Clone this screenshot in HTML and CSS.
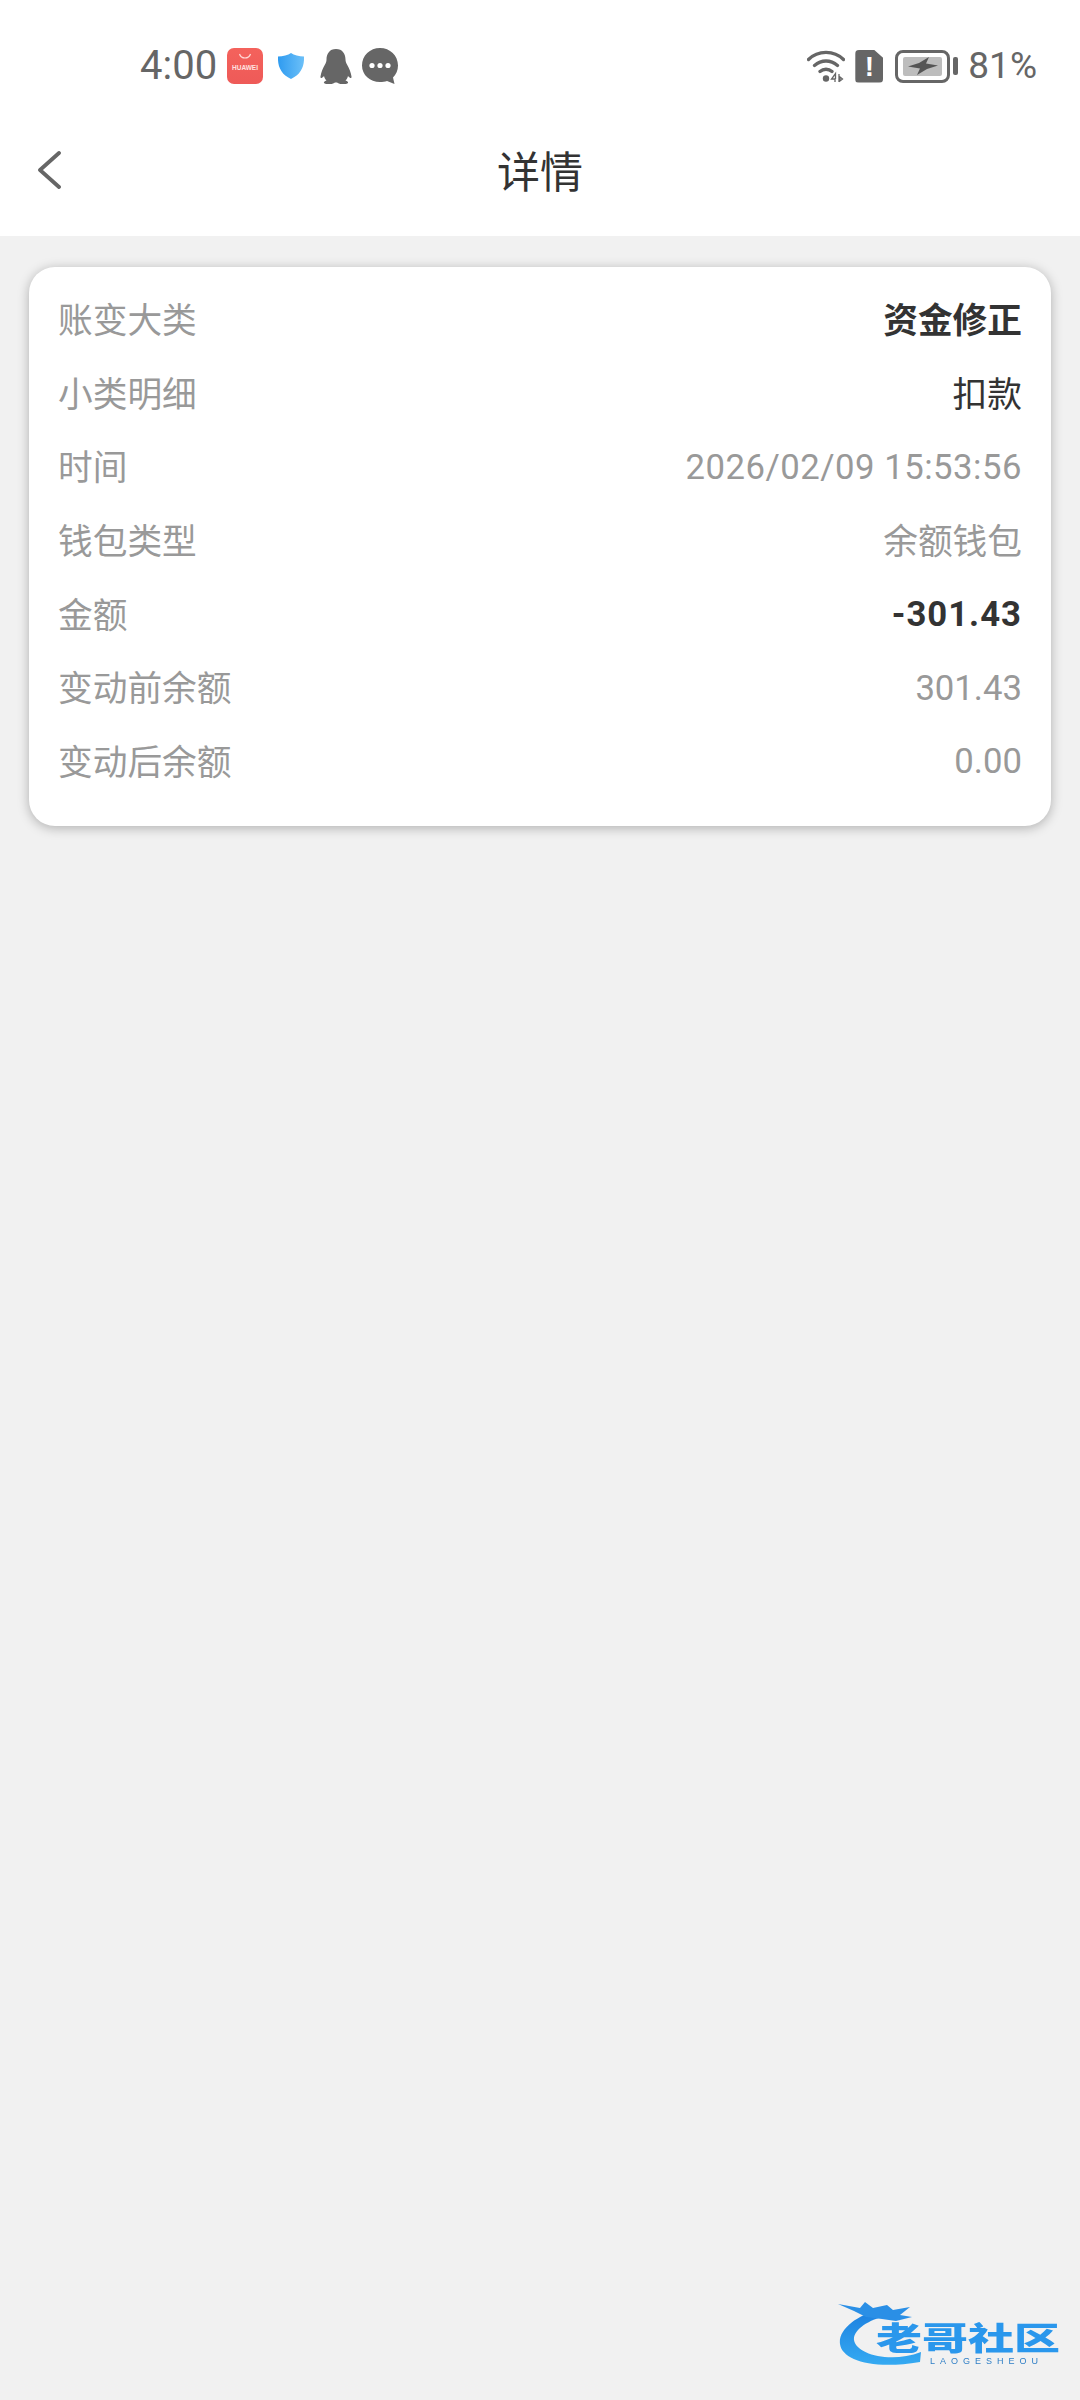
FILE: index.html
```html
<!DOCTYPE html>
<html lang="zh-CN">
<head>
  <meta charset="UTF-8">
  <meta name="viewport" content="width=device-width, initial-scale=1.0">
  <title>详情</title>
  <link rel="stylesheet" href="styles.css">
</head>
<body>
  <header class="top_area">
    <div class="status_bar">
      <div class="status_left">
        <span class="status_time">4:00</span>
        <div class="app_badge">
          <svg class="badge_smile" width="14" height="6" viewBox="0 0 14 6"><path d="M1.500 1c1 3 3 4 5.500 4s4.500-1 5.500-4" fill="none" stroke="#ffd9d6" stroke-width="1.200"/></svg>
          <span class="badge_text">HUAWEI</span>
        </div>
        <svg class="ico_shield" width="26" height="26" viewBox="0 0 26 26">
          <defs><linearGradient id="shield_fill" x1="0" y1="0" x2="1" y2="0"><stop offset="0" stop-color="#2f9bf0"/><stop offset="1" stop-color="#6cc0f8"/></linearGradient></defs>
          <path d="M13 0c3 2 8 3.500 13 3.500 .5 10-3 18-13 22.500C3 21.500-.5 13.500 0 3.500 5 3.500 10 2 13 0z" fill="url(#shield_fill)"/>
        </svg>
        <svg class="ico_qq" width="32" height="35" viewBox="0 0 32 35">
          <path d="M16 0c6.500 0 9.500 5 9.500 10.500 0 2 .5 3 1.500 5 2 3.500 4 8 4.500 12 .2 2-1 2.200-3.500-.5-.5 2-1.500 3.500-2.500 4.500 2 .7 3 1.500 2.500 2.500-.5 1-3 1-6 1-2.500 0-4-.7-5-1.500h-2c-1 .8-2.500 1.500-5 1.500-3 0-5.500 0-6-1-.5-1 .5-1.800 2.500-2.500-1-1-2-2.500-2.500-4.500C1.500 29.700.300 29.500.5 27.500c.5-4 2.500-8.500 4.500-12 1-2 1.500-3 1.500-5C6.500 5 9.500 0 16 0z" fill="#666"/>
        </svg>
        <svg class="ico_chat" width="36" height="37" viewBox="0 0 36 37">
          <path d="M18 0c10 0 18 7.500 18 17.500 0 5-2 9-5 12l1.500 6.500-7.500-3c-2 .7-4.500 1-7 1C8 34 0 27 0 17.500 0 7.500 8 0 18 0z" fill="#666"/>
          <circle cx="10" cy="17.500" r="2.600" fill="#fff"/><circle cx="18" cy="17.500" r="2.600" fill="#fff"/><circle cx="26" cy="17.500" r="2.600" fill="#fff"/>
        </svg>
      </div>
      <div class="status_right">
        <svg class="ico_wifi" width="38" height="34" viewBox="0 0 38 34">
          <path d="M1.500 10.500C11 1 27 1 36.500 10.500M7.500 16.500c7-6 16-6 23 0M13 22.500c3.500-3 8.500-3 12 0" fill="none" stroke="#666" stroke-width="3.300" stroke-linecap="round"/>
          <circle cx="19" cy="29.500" r="3.200" fill="#666"/>
          <path d="M28 33v-3h-3.500l4-5.500v5.500M32 25v8M33 28l2.500 2-2.500 2z" fill="none" stroke="#666" stroke-width="1.300"/>
        </svg>
        <div class="sim_card"><span class="sim_mark">!</span></div>
        <div class="battery">
          <div class="battery_body">
            <div class="battery_level">
              <svg width="30" height="18" viewBox="0 0 30 18"><path d="M0 9.500l11-3.500L21 0l-3 6.500 12 2-11 3.500L9 18l3-6.500z" fill="#555"/></svg>
            </div>
          </div>
          <div class="battery_nub"></div>
        </div>
        <span class="status_pct">81%</span>
      </div>
    </div>
    <nav class="nav_bar">
      <svg class="ico_back" width="24" height="38" viewBox="0 0 24 38"><path d="M22 2L3 19l19 17" fill="none" stroke="#666" stroke-width="3.800" stroke-linecap="round" stroke-linejoin="round"/></svg>
      <h1 class="nav_tit">详情</h1>
    </nav>
  </header>

  <main class="content">
    <section class="detail_card">
      <div class="detail_row"><span class="row_label">账变大类</span><span class="row_value text_strong">资金修正</span></div>
      <div class="detail_row"><span class="row_label">小类明细</span><span class="row_value text_dark">扣款</span></div>
      <div class="detail_row"><span class="row_label">时间</span><span class="row_value text_num text_time">2026/02/09 15:53:56</span></div>
      <div class="detail_row"><span class="row_label">钱包类型</span><span class="row_value">余额钱包</span></div>
      <div class="detail_row"><span class="row_label">金额</span><span class="row_value text_num text_strong text_amount">-301.43</span></div>
      <div class="detail_row"><span class="row_label">变动前余额</span><span class="row_value text_num">301.43</span></div>
      <div class="detail_row"><span class="row_label">变动后余额</span><span class="row_value text_num">0.00</span></div>
    </section>
  </main>

  <div class="watermark">
    <svg class="mark_dragon" width="90" height="70" viewBox="0 0 90 70">
      <defs><linearGradient id="mark_fill" x1="0" y1="0" x2="0" y2="1"><stop offset="0" stop-color="#1c7fdf"/><stop offset="1" stop-color="#35aaf2"/></linearGradient></defs>
      <path d="M42 10C18 15 0 30 2 44c2 16 32 26 80 18l1-10C52 64 18 54 16 40c-1-10 14-20 32-24z" fill="url(#mark_fill)"/>
      <path d="M0 4l22 4 5-6 8 6 14-3 6 5 17-3-10 8 12 2-16 4-14-2-16-2-12-6z" fill="#2a8fe6"/>
    </svg>
    <div class="mark_name">老哥社区</div>
    <div class="mark_sub">LAOGESHEOU</div>
  </div>
</body>
</html>
```

FILE: styles.css
```css
*{margin:0;padding:0;box-sizing:border-box;}
html,body{width:100%;height:100%;}
body{position:relative;background-color:#f1f1f1;font-family:Roboto,"Noto Sans CJK SC",sans-serif;overflow:hidden;}

.top_area{height:236px;padding-top:48px;background-color:#fff;}
.status_bar{display:flex;justify-content:space-between;align-items:center;height:36px;padding:0 43px 0 140px;}
.status_left,.status_right{display:flex;align-items:center;}
.status_time{width:87px;font-size:40px;line-height:36px;color:#666;}
.status_pct{margin-left:10px;font-size:37px;line-height:36px;color:#666;}

.app_badge{display:flex;flex-direction:column;align-items:center;width:36px;height:36px;border-radius:7px;background:linear-gradient(#f4625c,#ee5a58);}
.badge_smile{margin-top:5px;}
.badge_text{margin-top:5px;font-family:"Liberation Sans",sans-serif;font-size:6.500px;font-weight:bold;line-height:8px;color:#ffe3e0;}
.ico_shield{margin-left:15px;}
.ico_qq{margin-left:16px;}
.ico_chat{margin-left:10px;}

.sim_card{display:flex;justify-content:center;align-items:center;width:28px;height:33px;margin-left:10px;background-color:#666;border-radius:4px;clip-path:polygon(0 0,66% 0,100% 26%,100% 100%,0 100%);}
.sim_mark{font-family:"Liberation Sans",sans-serif;font-size:28px;font-weight:bold;line-height:33px;color:#fff;}

.battery{display:flex;align-items:center;margin-left:12px;}
.battery_body{display:flex;width:55px;height:33px;padding:4px 5px;border:3px solid #666;border-radius:8px;}
.battery_level{display:flex;justify-content:center;align-items:center;flex:1;background-color:#bdbdbd;border-radius:2px;}
.battery_nub{width:5px;height:18px;margin-left:3px;background-color:#666;border-radius:2px;}

.nav_bar{position:relative;display:flex;justify-content:center;align-items:center;height:108px;margin-top:31px;}
.ico_back{position:absolute;left:37px;top:36px;}
.nav_tit{font-size:43px;font-weight:400;color:#333;}

.content{padding:31px 29px 0;}
.detail_card{padding:14px 29px 29px;background-color:#fff;border-radius:26px;box-shadow:0 2px 12px rgba(0,0,0,.28);}
.detail_row{display:flex;justify-content:space-between;align-items:center;height:73.700px;font-size:34.700px;}
.row_label{color:#999;}
.row_value{color:#999;}
.text_dark{color:#333;}
.text_strong{font-weight:bold;color:#333;}
.text_num{margin-top:3px;}
.text_time{letter-spacing:.5px;}
.text_amount{letter-spacing:1px;}

.watermark{position:absolute;left:838px;top:2300px;width:230px;height:76px;filter:blur(.5px);}
.mark_dragon{position:absolute;left:0;top:0;}
.mark_name{position:absolute;left:38px;top:24px;font-size:46px;font-weight:900;line-height:31px;color:#2a97ec;white-space:nowrap;transform:scaleY(.68);transform-origin:left center;}
.mark_sub{position:absolute;left:92px;top:56px;font-family:"Liberation Sans",sans-serif;font-size:9px;line-height:11px;letter-spacing:5px;color:#2f7fc6;white-space:nowrap;}
```
